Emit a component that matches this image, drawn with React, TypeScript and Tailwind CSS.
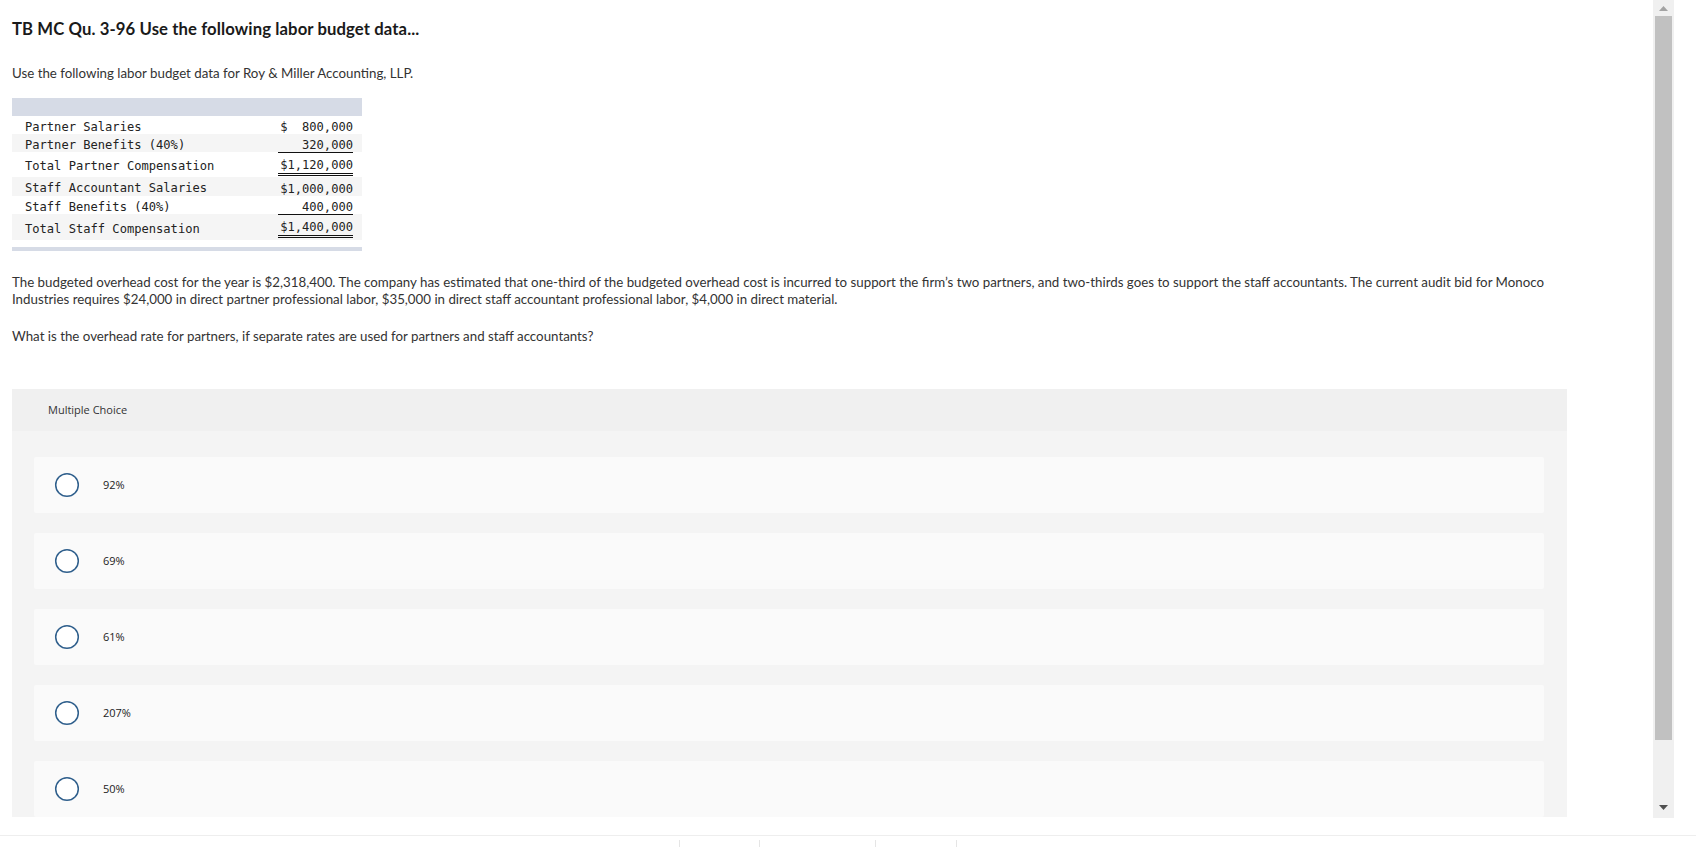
import React from "react";

const rows = [
  { label: "Partner Salaries", value: "$  800,000", bg: "bg-white", h: "h-[18px]", line: "none" },
  { label: "Partner Benefits (40%)", value: "320,000", bg: "bg-[#f5f5f5]", h: "h-[18px]", line: "single" },
  { label: "Total Partner Compensation", value: "$1,120,000", bg: "bg-white", h: "h-[25px]", line: "double" },
  { label: "Staff Accountant Salaries", value: "$1,000,000", bg: "bg-[#f5f5f5]", h: "h-[19px]", line: "none" },
  { label: "Staff Benefits (40%)", value: "400,000", bg: "bg-white", h: "h-[18px]", line: "single" },
  { label: "Total Staff Compensation", value: "$1,400,000", bg: "bg-[#f5f5f5]", h: "h-[26px]", line: "double" },
];

const options = ["92%", "69%", "61%", "207%", "50%"];

function Radio() {
  return (
    <svg width="26" height="26" viewBox="0 0 26 26" className="shrink-0">
      <circle cx="13" cy="13" r="11.3" fill="#ffffff" stroke="#2f5f8c" strokeWidth="1.5" />
    </svg>
  );
}

export default function App() {
  return (
    <div className="w-[1696px] h-[847px] bg-white overflow-hidden flex flex-col" style={{ fontFamily: "Lato, 'Open Sans', sans-serif" }}>
      <div className="h-[818px] flex shrink-0">
        <div className="w-[1653px] overflow-hidden pl-[12px] pt-[18px]">
          <h1 className="text-[16.7px] font-bold text-[#1a1a1a] leading-[22px] tracking-[0.1px]">
            TB MC Qu. 3-96 Use the following labor budget data...
          </h1>
          <p className="mt-[24px] text-[13.3px] leading-[18px] text-[#333]">
            Use the following labor budget data for Roy &amp; Miller Accounting, LLP.
          </p>
          <div className="mt-[16px] w-[350px]" style={{ fontFamily: "'DejaVu Sans Mono', 'Liberation Mono', monospace" }}>
            <div className="h-[18px] bg-[#d6dbe6]" />
            {rows.map((r) => (
              <div key={r.label} className={`${r.bg} ${r.h} flex items-center justify-between pt-[4px] pl-[13px] pr-[9px] text-[12.1px] text-[#222]`}>
                <span className="whitespace-pre">{r.label}</span>
                <span
                  className={`whitespace-pre text-right w-[75px] ${
                    r.line === "single"
                      ? "border-b border-[#111] leading-[14px]"
                      : r.line === "double"
                      ? "border-b-[3px] border-double border-[#111] leading-[15px]"
                      : "leading-[14px]"
                  }`}
                >
                  {r.value}
                </span>
              </div>
            ))}
            <div className="h-[7px] bg-white" />
            <div className="h-[4px] bg-[#d6dbe6]" />
          </div>
          <p className="mt-[23px] w-[1540px] text-[13.3px] leading-[17px] text-[#333]">
            The budgeted overhead cost for the year is $2,318,400. The company has estimated that one-third of the budgeted overhead cost is incurred to support the firm’s two partners, and two-thirds goes to support the staff accountants. The current audit bid for Monoco Industries requires $24,000 in direct partner professional labor, $35,000 in direct staff accountant professional labor, $4,000 in direct material.
          </p>
          <p className="mt-[20px] text-[13.3px] leading-[17px] text-[#333]">
            What is the overhead rate for partners, if separate rates are used for partners and staff accountants?
          </p>
          <div className="mt-[44px] w-[1555px] bg-[#f4f4f4]" style={{ fontFamily: "'Open Sans', sans-serif" }}>
            <div className="h-[42px] bg-[#f0f0f0] flex items-center pl-[36px] text-[11px] text-[#333]">
              Multiple Choice
            </div>
            <div className="pt-[26px] pl-[22px] pr-[23px] flex flex-col gap-[20px]">
              {options.map((o) => (
                <div key={o} className="h-[56px] bg-[#fafafa] rounded-[2px] flex items-center pl-[20px]">
                  <Radio />
                  <span className="ml-[23px] text-[11px] text-[#222]">{o}</span>
                </div>
              ))}
            </div>
          </div>
        </div>
        <div className="w-[21px] bg-[#f0f0f0] flex flex-col items-center shrink-0">
          <div className="h-[16px] flex items-center justify-center">
            <svg width="9" height="5" viewBox="0 0 9 5"><path d="M0 5 L4.5 0 L9 5 Z" fill="#a3a3a3" /></svg>
          </div>
          <div className="w-[17px] h-[724px] bg-[#c1c1c1]" />
          <div className="flex-1 flex items-end justify-center pb-[8px]">
            <svg width="9" height="5" viewBox="0 0 9 5"><path d="M0 0 L9 0 L4.5 5 Z" fill="#505050" /></svg>
          </div>
        </div>
        <div className="flex-1" />
      </div>
      <div className="h-[17px] shrink-0" />
      <div className="h-[12px] border-t border-[#eeeeee] flex items-end shrink-0">
        <div className="w-[679px]" />
        <div className="w-[1px] h-[7px] bg-[#e5e5e5]" />
        <div className="w-[79px]" />
        <div className="w-[1px] h-[7px] bg-[#e5e5e5]" />
        <div className="w-[115px]" />
        <div className="w-[1px] h-[7px] bg-[#e5e5e5]" />
        <div className="w-[80px]" />
        <div className="w-[1px] h-[7px] bg-[#e5e5e5]" />
      </div>
    </div>
  );
}
